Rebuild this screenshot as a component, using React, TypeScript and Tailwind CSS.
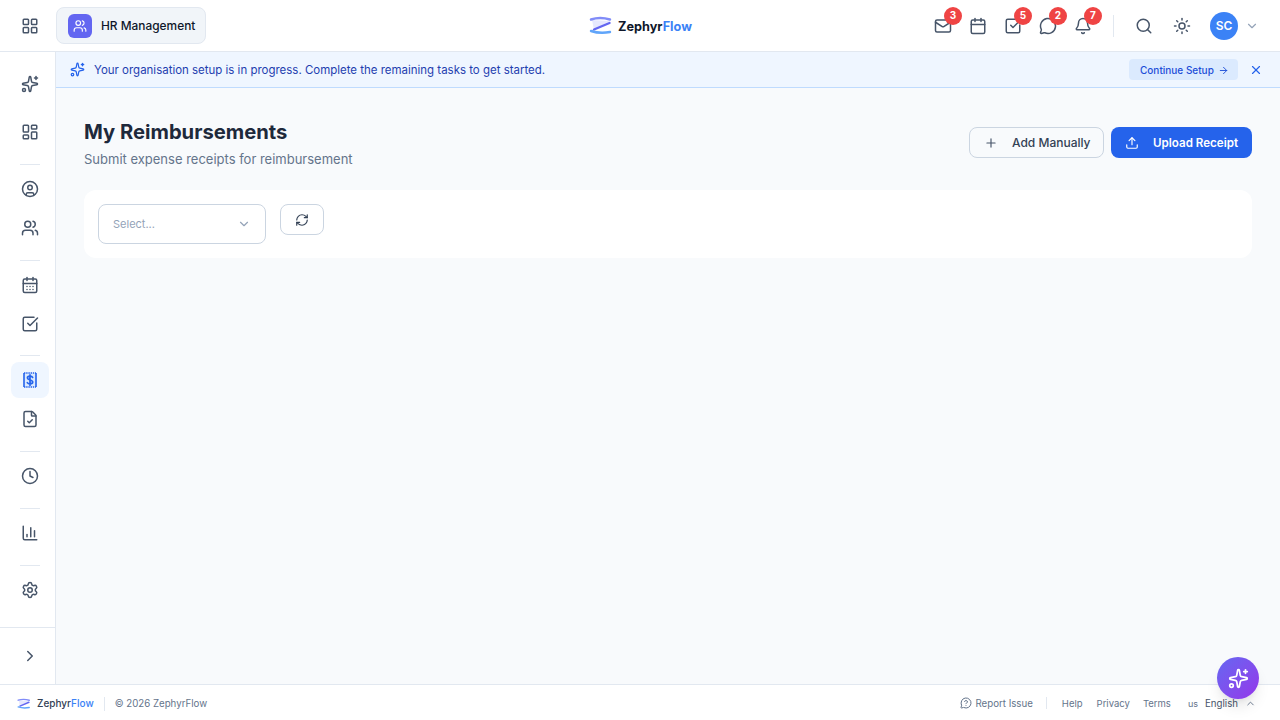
import React from "react"
import {
  ArrowRight,
  Bell,
  Calendar,
  CalendarDays,
  ChartColumn,
  ChevronDown,
  ChevronRight,
  ChevronUp,
  CircleUser,
  Clock,
  FileCheck,
  LayoutDashboard,
  LayoutGrid,
  Mail,
  MessageCircle,
  MessageCircleQuestion,
  Plus,
  RefreshCw,
  Search,
  Settings,
  Sparkles,
  SquareCheckBig,
  Sun,
  Upload,
  Users,
  X,
} from "lucide-react"

function ZLogo({ small }: { small?: boolean }) {
  return (
    <svg viewBox="0 0 24 20" className={small ? "w-[14px] h-[12px]" : "w-[24px] h-[20px]"} fill="none">
      <path d="M3 4 L21 5 L5 14 Z" fill="#818cf8" fillOpacity="0.2" />
      <path d="M2 3.5 Q11 0.5 21 3.5" stroke="#818cf8" strokeWidth="2.4" strokeLinecap="round" />
      <path d="M20.5 7 L5 13.5" stroke="#6366f1" strokeWidth="2.4" strokeLinecap="round" />
      <path d="M2 15 Q11 18 21 16" stroke="#60a5fa" strokeWidth="2.4" strokeLinecap="round" />
    </svg>
  )
}

function ReceiptDollar() {
  return (
    <svg viewBox="0 0 18 18" className="w-[18px] h-[18px]" fill="none" stroke="#2563eb">
      <rect x="3" y="2" width="12" height="14" fill="#dbeafe" stroke="none" />
      <path d="M3 2V16M15 2V16" strokeWidth="1.6" />
      <path d="M3 2H15M3 16H15" strokeWidth="1.6" strokeDasharray="1.4 0.8" />
      <path d="M11.6 6.4C11.2 5.6 10.3 5.2 9 5.2 7.5 5.2 6.4 5.8 6.4 7 6.4 9.4 11.7 8.5 11.7 11 11.7 12.2 10.5 12.9 9 12.9 7.7 12.9 6.8 12.4 6.3 11.6M9 3.9V14.2" strokeWidth="1.7" strokeLinecap="round" />
    </svg>
  )
}

function TopIcon({ children, badge, className }: { children: React.ReactNode; badge?: number; className?: string }) {
  return (
    <div className={"relative w-[35px] h-[36px] flex items-center justify-center text-[#475569] " + (className ?? "")}>
      {children}
      {badge && (
        <span className="absolute top-[-1px] left-[19px] w-[18px] h-[18px] rounded-full bg-[#ef4444] text-white text-[10px] font-bold flex items-center justify-center">
          {badge}
        </span>
      )}
    </div>
  )
}

function NavItem({ children, active, className }: { children: React.ReactNode; active?: boolean; className?: string }) {
  return (
    <div
      className={
        "w-[38px] h-9 rounded-lg flex items-center justify-center shrink-0 " +
        (active ? "bg-[#eff6ff] " : "text-[#475569] ") +
        (className ?? "")
      }
    >
      {children}
    </div>
  )
}

function Divider() {
  return <div className="w-5 h-px bg-[#e2e8f0] mt-[14px] mb-[6px] shrink-0" />
}

export default function App() {
  return (
    <div
      className="w-[1280px] h-[720px] flex flex-col overflow-hidden bg-white text-[#0f172a]"
      style={{ fontFamily: '"Inter", "Noto Sans", sans-serif' }}
    >
      <header className="relative h-[52px] shrink-0 flex items-center border-b border-[#e2e8f0] bg-white">
        <div className="w-[56px] pl-1 flex justify-center text-[#475569]">
          <LayoutGrid size={18} />
        </div>
        <div className="h-[37px] w-[150px] rounded-lg bg-[#f1f5f9] border border-[#e2e8f0] flex items-center pl-[11px] gap-[9px]">
          <div className="w-6 h-6 rounded-md bg-[#6366f1] flex items-center justify-center text-white">
            <Users size={14} />
          </div>
          <span className="text-[11.9px] font-medium whitespace-nowrap">HR Management</span>
        </div>
        <div className="absolute left-[589px] top-[15px] flex items-center gap-[5px]">
          <ZLogo />
          <span className="mt-[2px] text-[12.7px] font-bold text-[#0f172a]">
            Zephyr<span className="text-[#3b82f6]">Flow</span>
          </span>
        </div>
        <div className="ml-auto flex items-center">
          <TopIcon badge={3}><Mail size={18} /></TopIcon>
          <TopIcon><Calendar size={18} /></TopIcon>
          <TopIcon badge={5}><SquareCheckBig size={18} /></TopIcon>
          <TopIcon badge={2}><MessageCircle size={18} /></TopIcon>
          <TopIcon badge={7}><Bell size={18} /></TopIcon>
          <div className="w-px h-[22px] bg-[#e2e8f0] ml-[13px] mr-[12px]" />
          <TopIcon><Search size={18} /></TopIcon>
          <TopIcon className="ml-[3px]"><Sun size={18} /></TopIcon>
          <div className="w-7 h-7 ml-[11px] rounded-full bg-[#3b82f6] text-white text-[12px] font-semibold flex items-center justify-center">
            SC
          </div>
          <ChevronDown size={14} className="text-[#94a3b8] ml-[7px] mr-[21px]" />
        </div>
      </header>

      <div className="flex flex-1 min-h-0">
        <aside className="w-[56px] shrink-0 flex flex-col items-center border-r border-[#e2e8f0] bg-white">
          <div className="flex-1 flex flex-col items-center pt-[14px] pl-[5px]">
            <NavItem><Sparkles size={18} /></NavItem>
            <NavItem className="mt-3"><LayoutDashboard size={18} /></NavItem>
            <Divider />
            <NavItem><CircleUser size={18} /></NavItem>
            <NavItem className="mt-[3px]"><Users size={18} /></NavItem>
            <Divider />
            <NavItem><CalendarDays size={18} /></NavItem>
            <NavItem className="mt-[3px] mb-[-1px]"><SquareCheckBig size={18} /></NavItem>
            <Divider />
            <NavItem active><ReceiptDollar /></NavItem>
            <NavItem className="mt-[3px]"><FileCheck size={18} /></NavItem>
            <Divider />
            <NavItem><Clock size={18} /></NavItem>
            <Divider />
            <NavItem><ChartColumn size={18} /></NavItem>
            <Divider />
            <NavItem><Settings size={18} /></NavItem>
          </div>
          <div className="w-full h-[57px] pl-1 border-t border-[#e2e8f0] flex items-center justify-center text-[#475569]">
            <ChevronRight size={18} />
          </div>
        </aside>

        <div className="flex-1 min-w-0 flex flex-col bg-[#f8fafc]">
          <div className="h-9 shrink-0 flex items-center bg-[#eff6ff] border-b border-[#bfdbfe] pl-[14px] pr-[17px]">
            <Sparkles size={15} className="text-[#2563eb]" />
            <span className="ml-[9px] mt-[2px] text-[11.47px] text-[#1e40af]">
              Your organisation setup is in progress. Complete the remaining tasks to get started.
            </span>
            <div className="ml-auto w-[109px] h-[21px] pl-[11px] pt-px rounded bg-[#dbeafe] text-[#1d4ed8] text-[10px] font-medium flex items-center gap-1">
              Continue Setup
              <ArrowRight size={11} />
            </div>
            <X size={14} className="ml-[11px] text-[#2563eb]" />
          </div>

          <main className="flex-1 px-[28px] pt-[32px]">
            <div className="flex items-start justify-between">
              <div>
                <h1 className="text-[20.2px] leading-[24px] font-bold text-[#1e293b]">My Reimbursements</h1>
                <p className="mt-[5px] text-[13px] leading-[20px] text-[#64748b]">Submit expense receipts for reimbursement</p>
              </div>
              <div className="flex items-center gap-[7px] pt-[7px]">
                <div className="w-[135px] h-[31px] rounded-lg border border-[#cbd5e1] flex items-center pl-[14px] text-[#334155]">
                  <Plus size={14} className="text-[#475569]" />
                  <span className="ml-[14px] text-[12px] font-medium">Add Manually</span>
                </div>
                <div className="w-[141px] h-[31px] rounded-lg bg-[#2563eb] flex items-center pl-[14px] text-white">
                  <Upload size={14} />
                  <span className="ml-[14px] mt-[2px] text-[11.6px] font-semibold">Upload Receipt</span>
                </div>
              </div>
            </div>
            <div className="mt-[21px] h-[68px] rounded-xl bg-white p-[14px] flex items-start gap-[14px]">
              <div className="w-[168px] h-10 rounded-lg border border-[#cbd5e1] flex items-center justify-between pl-[14px] pr-[14px]">
                <span className="text-[11px] text-[#94a3b8]">Select...</span>
                <ChevronDown size={14} className="text-[#94a3b8]" />
              </div>
              <div className="w-[44px] h-[31px] rounded-lg border border-[#cbd5e1] flex items-center justify-center text-[#334155]">
                <RefreshCw size={14} />
              </div>
            </div>
          </main>
        </div>
      </div>

      <footer className="relative h-[36px] shrink-0 flex items-center border-t border-[#e2e8f0] bg-white pl-[17px] pr-[24px] pt-[2px] text-[9.7px] text-[#64748b]">
        <ZLogo small />
        <span className="ml-[6px] text-[10px] text-[#334155] font-medium">
          Zephyr<span className="text-[#3b82f6]">Flow</span>
        </span>
        <div className="w-px h-[14px] bg-[#e2e8f0] mx-[10px]" />
        <span className="mt-px">© 2026 ZephyrFlow</span>
        <div className="ml-auto flex items-center">
          <MessageCircleQuestion size={12} />
          <span className="ml-[3px] mt-px">Report Issue</span>
          <div className="w-px h-[12px] bg-[#e2e8f0] ml-[13px] mr-[15px]" />
          <span className="mt-px text-[9.5px]">Help</span>
          <span className="ml-[14px] mt-px text-[9.5px]">Privacy</span>
          <span className="ml-[13px] mt-px text-[9.5px]">Terms</span>
          <span className="ml-[17px] text-[9px]">us</span>
          <span className="ml-[7px] mt-px text-[#475569]">English</span>
          <ChevronUp size={11} className="ml-[7px]" />
        </div>
        <div className="absolute left-[1217px] top-[-28px] w-[42px] h-[42px] rounded-full bg-gradient-to-br from-[#6366f1] to-[#9333ea] shadow-lg flex items-center justify-center text-white">
          <Sparkles size={21} />
        </div>
      </footer>
    </div>
  )
}
